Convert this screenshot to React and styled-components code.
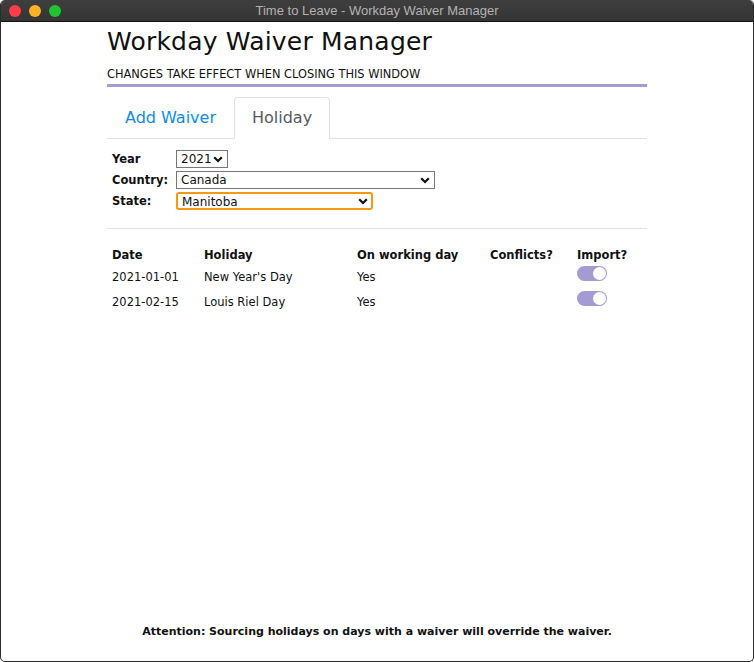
import React, { useState } from 'react';
import styled, { createGlobalStyle } from 'styled-components';

const FONT = '"DejaVu Sans", "Open Sans", sans-serif';

const GlobalStyle = createGlobalStyle`
  html, body {
    margin: 0;
    padding: 0;
    background: #ffffff;
  }
  * {
    box-sizing: border-box;
  }
`;

const Window = styled.div`
  display: flex;
  flex-direction: column;
  width: 754px;
  height: 662px;
  border: 1px solid #2b2b2b;
  border-top: none;
  border-radius: 5px;
  overflow: hidden;
  background: #ffffff;
  font-family: ${FONT};
  color: #111;
`;

const TitleBar = styled.div`
  position: relative;
  display: flex;
  align-items: center;
  justify-content: center;
  height: 22px;
  flex-shrink: 0;
  background: linear-gradient(#3e3e3e, #353535);
  border-bottom: 1px solid #111;
  color: #b3b3b3;
  font-size: 13px;
  font-family: "Liberation Sans", sans-serif;
`;

const Lights = styled.div`
  position: absolute;
  left: 8px;
  top: 5px;
  display: flex;
  gap: 8px;
`;

const Light = styled.span`
  width: 12px;
  height: 12px;
  border-radius: 50%;
  background: ${p => p.color};
`;

const Content = styled.main`
  display: flex;
  flex-direction: column;
  width: 540px;
  margin: 0 auto;
  flex: 1;
`;

const Heading = styled.h1`
  margin: 5px 0 0;
  font-weight: 400;
  font-size: 25px;
  line-height: 30px;
  letter-spacing: 0.2px;
`;

const Notice = styled.div`
  margin-top: 10px;
  font-size: 11.4px;
  line-height: 14px;
  padding-bottom: 3px;
  border-bottom: 3px solid #a49bd3;
`;

const Tabs = styled.nav`
  display: flex;
  margin-top: 10px;
  border-bottom: 1px solid #e1e1e1;
`;

const Tab = styled.button`
  height: 42px;
  margin-bottom: -1px;
  padding: 0 17px 1px;
  background: ${p => (p.active ? '#fff' : 'transparent')};
  border: 1px solid ${p => (p.active ? '#dee2e6' : 'transparent')};
  border-bottom-color: ${p => (p.active ? '#fff' : 'transparent')};
  border-radius: 4px 4px 0 0;
  color: ${p => (p.active ? '#555b61' : '#0b8cf2')};
  font-family: ${FONT};
  font-size: 16px;
  cursor: pointer;
`;

const Form = styled.div`
  display: grid;
  grid-template-columns: 64px auto;
  grid-auto-rows: 18px;
  justify-content: start;
  align-items: center;
  row-gap: 3px;
  padding: 11px 5px 18px;
  border-bottom: 1px solid #e1e1e1;
`;

const Label = styled.label`
  font-size: 11.5px;
  line-height: 14px;
  font-weight: 700;
`;

const SelectWrap = styled.div`
  position: relative;
  width: ${p => p.width}px;
  height: 18px;
`;

const Select = styled.select`
  display: block;
  appearance: none;
  width: 100%;
  height: 18px;
  padding: 0 14px 0 4px;
  border: ${p => (p.focused ? '2px solid #f29a12' : '1px solid #777')};
  border-radius: ${p => (p.focused ? '3px' : '0')};
  background: #fff;
  font-family: ${FONT};
  font-size: 12px;
  line-height: 16px;
  color: #111;
  outline: none;
`;

const Chevron = styled.svg`
  position: absolute;
  right: 5px;
  top: 6px;
  width: 10px;
  height: 7px;
  pointer-events: none;
`;

const Table = styled.div`
  display: grid;
  grid-template-columns: 92px 153px 133px 87px auto;
  grid-template-rows: 21px;
  grid-auto-rows: 25px;
  align-items: center;
  padding: 14px 5px 0;
`;

const HeadCell = styled.div`
  font-size: 11.5px;
  font-weight: 700;
  align-self: start;
  padding-top: 5px;
`;

const Cell = styled.div`
  font-size: 11.5px;
`;

const Toggle = styled.span`
  position: relative;
  display: inline-block;
  width: 30px;
  height: 15px;
  margin-top: -6px;
  border-radius: 8px;
  background: #a49bd3;

  &::after {
    content: '';
    position: absolute;
    right: 1px;
    top: 1px;
    width: 13px;
    height: 13px;
    border-radius: 50%;
    background: #fff;
  }
`;

const Footer = styled.footer`
  margin-top: auto;
  padding-bottom: 23px;
  text-align: center;
  font-size: 11px;
  font-weight: 700;
`;

const ChevronIcon = () => (
  <Chevron viewBox="0 0 10 7">
    <path d="M1.2 1.2 L5 5 L8.8 1.2" fill="none" stroke="#111" strokeWidth="2.2" />
  </Chevron>
);

const Dropdown = ({ width, value, options, focused }) => (
  <SelectWrap width={width}>
    <Select focused={focused} defaultValue={value}>
      {options.map(o => (
        <option key={o}>{o}</option>
      ))}
    </Select>
    <ChevronIcon />
  </SelectWrap>
);

const holidays = [
  { date: '2021-01-01', name: "New Year's Day", working: 'Yes' },
  { date: '2021-02-15', name: 'Louis Riel Day', working: 'Yes' },
];

export default function App() {
  const [tab, setTab] = useState('holiday');

  return (
    <>
      <GlobalStyle />
      <Window>
        <TitleBar>
          <Lights>
            <Light color="#fe3c4a" />
            <Light color="#fdb224" />
            <Light color="#1fc532" />
          </Lights>
          Time to Leave - Workday Waiver Manager
        </TitleBar>
        <Content>
          <Heading>Workday Waiver Manager</Heading>
          <Notice>CHANGES TAKE EFFECT WHEN CLOSING THIS WINDOW</Notice>
          <Tabs>
            <Tab active={tab === 'waiver'} onClick={() => setTab('waiver')}>Add Waiver</Tab>
            <Tab active={tab === 'holiday'} onClick={() => setTab('holiday')}>Holiday</Tab>
          </Tabs>
          <Form>
            <Label>Year</Label>
            <Dropdown width={52} value="2021" options={['2020', '2021', '2022']} />
            <Label>Country:</Label>
            <Dropdown width={259} value="Canada" options={['Canada']} />
            <Label>State:</Label>
            <Dropdown width={197} value="Manitoba" options={['Manitoba']} focused />
          </Form>
          <Table>
            <HeadCell>Date</HeadCell>
            <HeadCell>Holiday</HeadCell>
            <HeadCell>On working day</HeadCell>
            <HeadCell>Conflicts?</HeadCell>
            <HeadCell>Import?</HeadCell>
            {holidays.map(h => (
              <React.Fragment key={h.date}>
                <Cell>{h.date}</Cell>
                <Cell>{h.name}</Cell>
                <Cell>{h.working}</Cell>
                <Cell />
                <Cell><Toggle /></Cell>
              </React.Fragment>
            ))}
          </Table>
          <Footer>Attention: Sourcing holidays on days with a waiver will override the waiver.</Footer>
        </Content>
      </Window>
    </>
  );
}
